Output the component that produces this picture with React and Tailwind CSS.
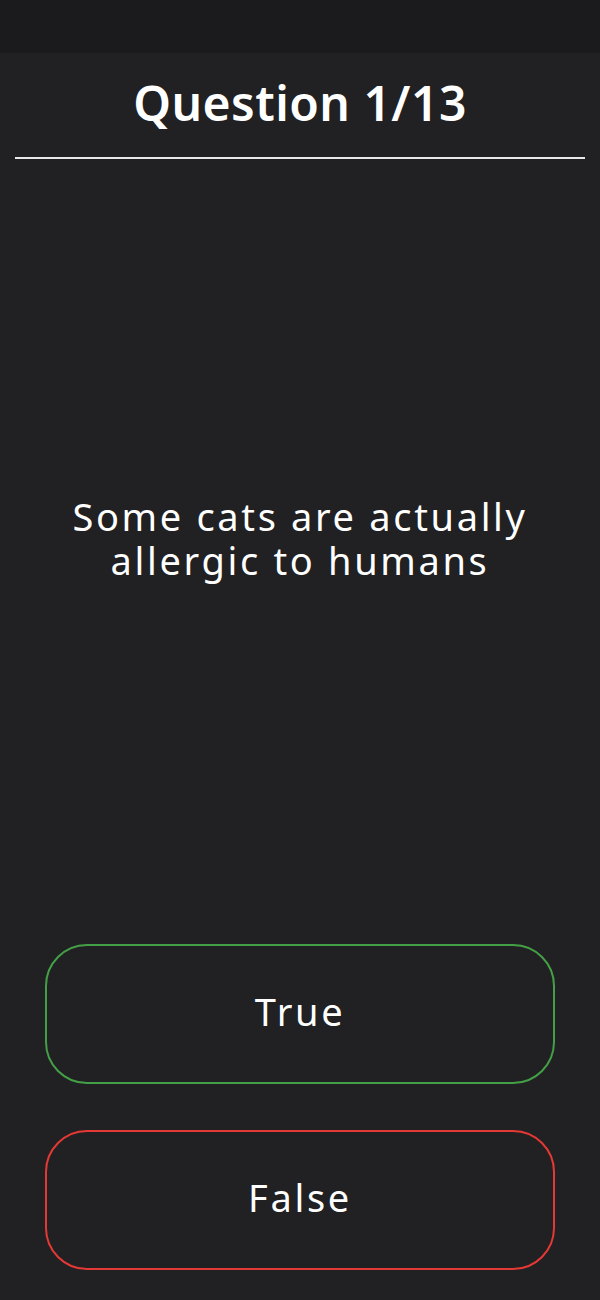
import React from "react";

const App = () => {
  return (
    <div
      className="w-[600px] h-[1300px] bg-[#212022] text-white flex flex-col"
      style={{ fontFamily: '"Noto Sans", Lato, sans-serif' }}
    >
      {/* status bar */}
      <div className="h-[53px] bg-[#1b1a1d] shrink-0"></div>

      {/* header */}
      <div className="px-[15px]">
        <h1 className="text-center text-[48px] font-semibold tracking-[0.01em] leading-[48px] pt-[26px] pb-[30px]">
          Question 1/13
        </h1>
        <div className="h-[2px] bg-[#e8e8e8]"></div>
      </div>

      {/* question */}
      <div className="h-[785px] flex flex-col items-center justify-center px-10 pb-[28px]">
        <p className="text-center text-[38px] leading-[44px] tracking-[0.07em]">
          Some cats are actually
          <br />
          allergic to humans
        </p>
      </div>

      {/* answers */}
      <div className="flex flex-col gap-[46px] px-[45px]">
        <button className="h-[140px] rounded-[42px] border-2 border-[#43a047] text-[38px] tracking-[0.07em] pb-[5px]">
          True
        </button>
        <button className="h-[140px] rounded-[42px] border-2 border-[#e53935] text-[38px] tracking-[0.07em] pb-[5px]">
          False
        </button>
      </div>
    </div>
  );
};

export default App;
